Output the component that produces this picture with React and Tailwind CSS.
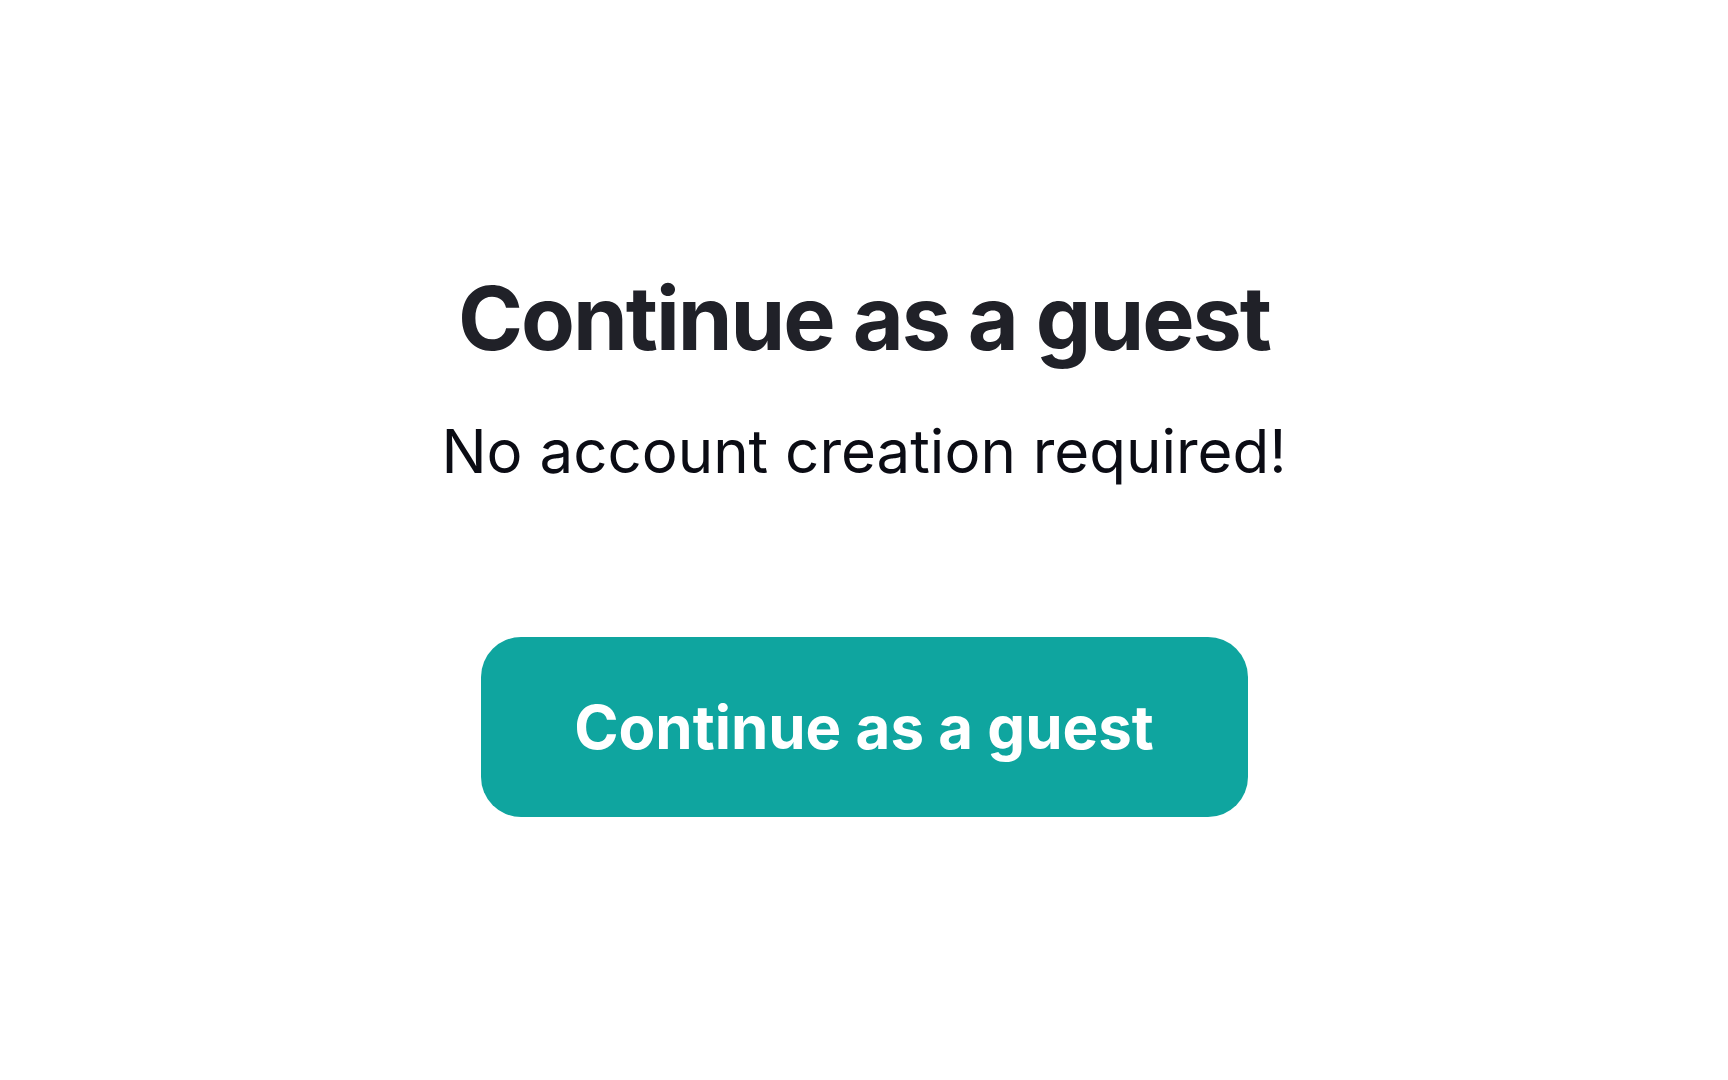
export default function App() {
  return (
    <div
      className="min-h-screen bg-white flex flex-col items-center"
      style={{ fontFamily: "Inter, 'Noto Sans', sans-serif" }}
    >
      <h1 className="mt-[268px] text-[88px] leading-[100px] font-bold tracking-[-2px] text-[#202128]">
        Continue as a guest
      </h1>
      <p className="mt-[47px] text-[60px] leading-[72px] text-[#0b0c14]">
        No account creation required!
      </p>
      <button className="mt-[150px] w-[767px] h-[180px] rounded-[40px] bg-[#0fa59f] text-white text-[60px] font-bold">
        Continue as a guest
      </button>
    </div>
  );
}
